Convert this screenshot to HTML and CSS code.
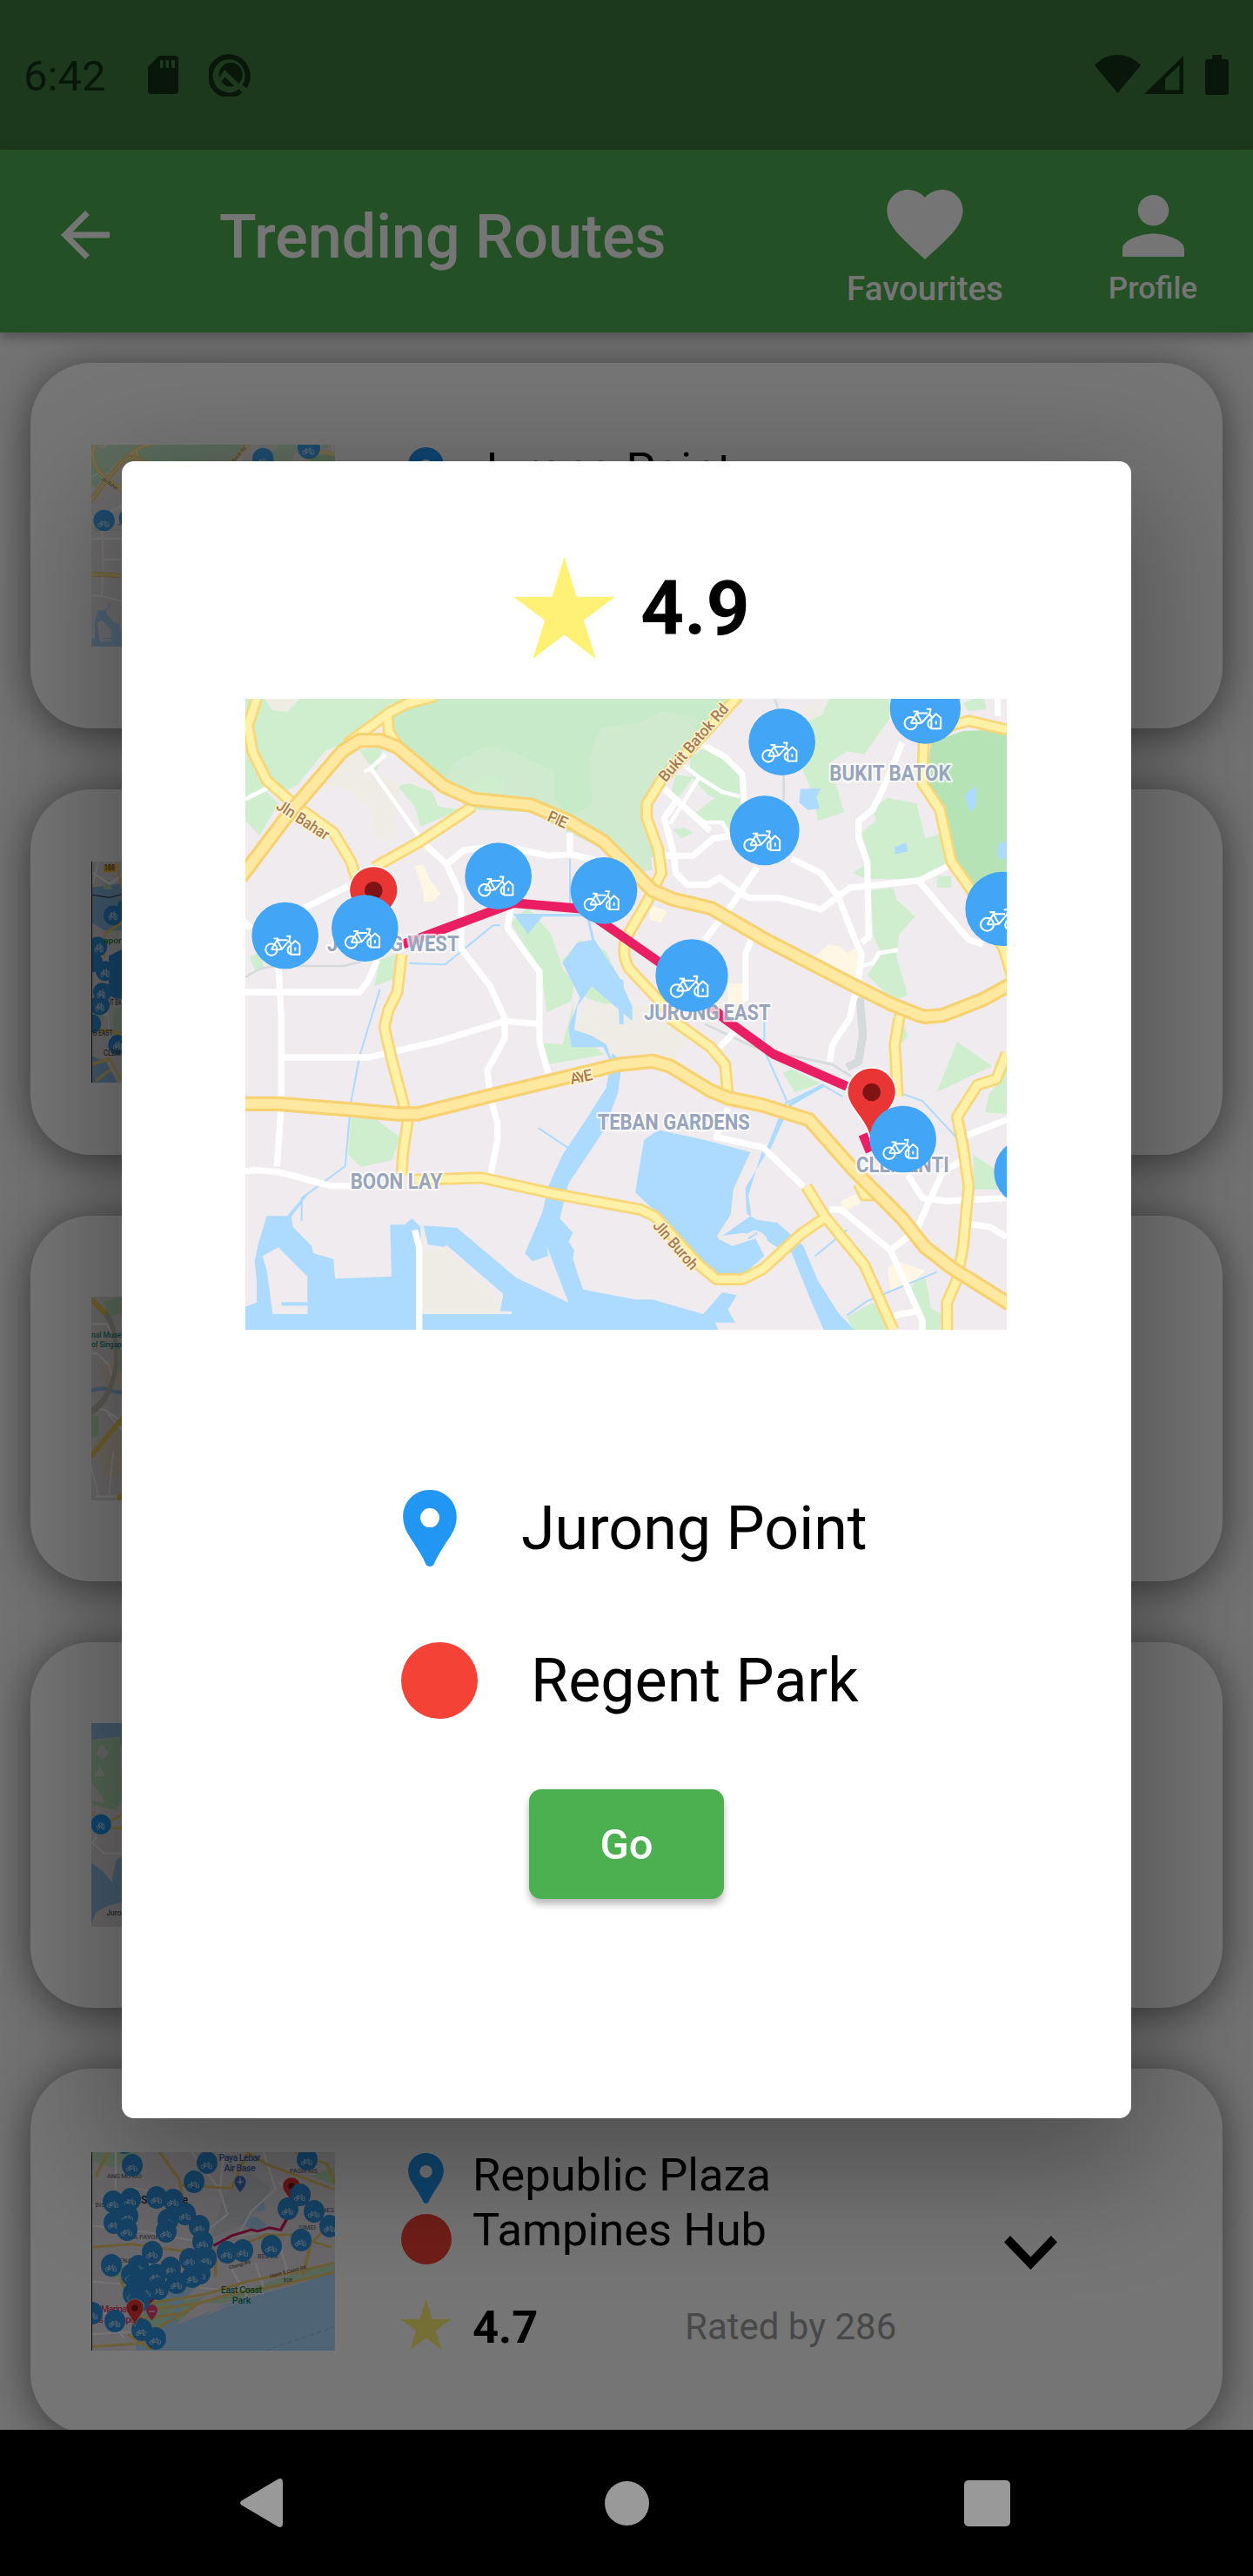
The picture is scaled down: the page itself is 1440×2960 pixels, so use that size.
FILE: index.html
```html
<!DOCTYPE html>
<html lang="en">
<head>
<meta charset="utf-8">
<title>Trending Routes</title>
<link rel="stylesheet" href="styles.css">
</head>
<body>
<svg class="defs" width="0" height="0" aria-hidden="true">
  <symbol id="star" viewBox="6 5.5 12 11.5" preserveAspectRatio="none"><path d="M12 14.3l3.71 2.7-1.42-4.36L18 10h-4.55L12 5.5 10.55 10H6l3.71 2.64L8.29 17z"/></symbol>
  <symbol id="place" viewBox="5 2 14 20"><path fill-rule="evenodd" d="M12 2C8 2 5 5.1 5 9c0 3.6 2.2 5.7 3.6 8.1 1 1.6 1.7 2.7 2.3 4.2.3.9 1.9.9 2.200 0 .6-1.5 1.300-2.600 2.300-4.200C16.800 14.700 19 12.600 19 9c0-3.900-3-7-7-7zm0 4.800a2.500 2.500 0 1 1 0 5 2.500 2.500 0 0 1 0-5z"/></symbol>
  <symbol id="bike" viewBox="-70 -45 140 90" overflow="visible">
    <g fill="none" stroke="#fff" stroke-width="6" stroke-linejoin="round">
      <circle cx="-42" cy="16" r="21"/>
      <path d="M-42 16l20-34L-4 14l26-30M-42 16H-14L-4 14M-24-18H16M-34-24h18M12-32h14l-4 16M22-16l8 14M28 34h32V-2L44-16 28 0z"/>
      <path d="M44 8v12"/>
      <path d="M28 32c-14-2-16-22-2-30"/>
    </g>
  </symbol>
  <symbol id="dock" viewBox="-115 -115 230 230" overflow="visible">
    <circle r="115" fill="#42a5f5"/>
    <use href="#bike" x="-75" y="-10" width="136" height="86"/>
  </symbol>
  <symbol id="end" viewBox="-90 -90 180 270" overflow="visible">
    <path d="M0-84a84 84 0 0 1 84 84C84 55 12 95 4 168Q0 180-4 168C-12 95-84 55-84 0A84 84 0 0 1 0-84z" fill="#ea3535" stroke="#fff" stroke-width="5"/>
    <circle r="31" fill="#801313"/>
  </symbol>
  <defs>
    <g id="mini-dock">
      <ellipse cx="12" cy="13" rx="12" ry="13" fill="#2f93e0"/>
      <use href="#bike" x="4.500" y="11" width="14" height="10"/>
    </g>
  </defs>

  <symbol id="jurong-map" viewBox="36 39 2625 2175" preserveAspectRatio="none">
    <path fill="#efebee" d="M0 0h2700v2300H0z"/>
    <g fill="#ceeece">
      <path d="M36 39H600L380 190 310 220 215 335 150 370 100 350 36 370zM36 370l74-10 40 40-65 110-49-50z"/>
      <path fill="#c7ebc8" d="M590 39H1750L1470 310l-50 110 35 160-75 20-110-80-120-60-130-60-200-20-100-50-170-150-20-80z"/>
      <path fill="#cfeace" d="M750 260l120-60 110 30 120 60v90l60 70 70-50-10-150 40-110 130-20 90-40 120 30-100 200-60 70-20 90 20 160-100 10-60-80-150-70-110-60-220-10-70-90z"/>
      <path d="M800 340l90-40 45 30-25 50-90-5zM560 340l40-10 80 30 20 50 80 10-140 60-20-70zM430 215l80-15-30 120z"/>
      <path d="M1570 240l60-40 90 50 30 60v90l-60 0-60-30-60-70zM1590 430l80-60 75 15v110l-40-10-30-20-60 0zM1510 490l40-6 30 16-40 20zM1500 380l20-80 60 10-60 80z"/>
      <path d="M2050 39h210l-5 71-85 120-60-10-60 40 50 170-90 30-20-100-30-70V120l20-40 40 20z"/>
      <path d="M2250 380l100 20 30 120 55-15 15 105-90 50h-180l-50-20 60-40-30-100 50-40-10-40z"/>
      <path d="M2190 700l80-10 10 40 65 60-55 60-10 80 40 130-50 20-90-90 50-70-30-70zM2420 650h50v40h-50zM2510 55l70-30 10 50-60 5z"/>
      <path d="M950 810l60-50 80 90 40 120 40 50-10 60-85 40-15-110-60-120zM1130 940l60-70 90 40 40 90-60-10-80-50-50 20zM1200 1030l80-20 50 40 20 100-80-60-60-20zM1070 1080h45l-35 40zM1170 1080l-40 150-75-5 20 75 200-35-40-30-80-20z"/>
      <path d="M400 1480l90 10 80 60-30 80-105 22-45-42zM500 940l50-20 10 80-80 30zM50 930l40-20 10 60-30 5z"/>
      <path d="M1890 1330l30-15 100 50-90 30zM2490 1220l120 85-190 90zM2661 1320l-60 80-15 65 75 5zM2545 1610l75 50 10 70h-80zM2110 2170l90-50 70 94H2130zM2350 2040l30-10 20 110 35 20-5 54h-50l-50-140zM2300 1150l20 50-25 30z"/>
    </g>
    <path fill="#b5e3b5" d="M2400 190l110-40 151-5v500l-130 40-60-120-40-160-50-70z"/>
    <path fill="#efebe5" d="M100 39h125l-45 45-50-5zM310 220l110-20 60 90 90 40-20 200-60-10-20-100-80-70-100-20zM1180 1150l50-60 110 0 40 190-50 10-60-60-90-30zM640 1940l90-6 190 180-10 46H640zM1320 1100l130-10 120 90-40 100-210 20zM1960 70l60-30 10 50-60 30z"/>
    <path fill="#fff6e3" d="M620 615l30-5 20 50 38 50-20 25-35 5-5-40zM2000 925l50-40 40 10 20 20 40-20 10 60-20 50zM1700 1020l60 0v70l-60 0zM1430 750l60 20-20 40-40-10zM2090 1770l60-30 5 40-60 30zM2250 2000l40-20 90 30-40 40-80 30z"/>
    <g fill="#addaff">
      <path d="M36 2135l39-15v-80l-7-60 12-60 30-98h70l60-72h10l-55 75 5 35 65 65 5 25 70 20 5 68 195-8-5-178h50l25-22 30 30v300h315v-10h-40l10-60-195-168-10 6-55-8-15-65 115 7 205 173 180 85-75-195 5 35-55 18-25-28 60-140 20-90 50-110 80-120 70-110 20-120 35 30-15 110-50 130-120 180-30 120 45 50-15 30 20 30-5 30 35 105 180 35 60 0 175 50 65-75 50 10-30 50 25 44H36z"/>
      <path d="M36 2160H1640l30 60H36z"/>
      <path d="M960 780h250l20 90-50 10-50 70 60 120-40 100 10 70 110 0 50 100-40-110-50-30-60-20 10-80 50-70 140 120V1100l-50-110-80-120-20-80-60 0-100 0-50 60z"/>
      <path d="M1410 1560l50-35 160 35 170 45-65 115-10 90-50 90 50 25 80-25 30 60-80 70h-80l-140-100-60-110-85-80z"/>
      <path d="M1820 1590l30-15-90 150 5 90 35 20 70 10 90 80 50 120 70 110 55 59h-105l-50-114-60-150-50-20-60-40-60-10-70 10 100-70-10-70zM1950 350l70-3-15 30 10 40-40 5-30-25zM2275 550l40-15 5 30-45 10zM2515 370l40-30v70l-20 20zM2630 540l31-10v60h-31zM1320 1000l20 10v150l-15 0z"/>
    </g>
    <path fill="#efebee" d="M95 1960l55-30 50 50 50 50v130H130l-20-150z"/>
    <path fill="none" stroke="#efebe5" stroke-width="13" d="M1785 1600l-60 130-10 90-45 70q30 30 70 15l50-28q50 10 40 60"/>
    <g fill="none" stroke="#addaff" stroke-width="12">
      <path d="M160 2125h90"/>
      <path stroke-width="6" d="M500 1040l-70 230-30 160-20 220-150 110v80M600 950l125 5 165-135h25M1155 590v170M1825 1100l0 150 80 180 120-60 70 40M1900 1430l-60 150M2300 1400l70 25 130 140M2000 1960l110-90M1800 1880l-30 20M1045 1518l120 80M2110 2165l70-50 240-100"/>
      <path d="M1910 1440l120-70M1890 1480l-50 110"/>
    </g>
    <g fill="none" stroke="#d5dbdd" stroke-width="8">
      <path d="M36 1000q50-40 120-40h220l60-15M1862 39l30 100v250M1620 1160l170 80 270 60 80 50"/>
      <path stroke-width="28" d="M2155 1070l10 130-15 90-40 20"/>
    </g>
    <g fill="none" stroke="#fff" stroke-width="22" stroke-linejoin="round">
      <path stroke-width="14" d="M36 385l75-38M460 285l60-55M445 290l30-12M470 280l180 255M1500 470l100-160 80 50 60 15M1520 390l100 75 60 0 20 35M1550 270l50 40M2160 960l40-10 20-35 65-10"/>
      <path d="M650 535l80 75 50 110v180l100 130 50 110v70l-60 110 10 90 25 90v60l-25 130M240 760l150-75M730 610l60-50 130-15 160 35 80-5 80 20M36 1050h394l30-40 30-70M150 960l10 180v290l-15 220M160 1275h300l240-55 230-70 120 10M950 760l-10 70 110 150v240l30 110M36 1668l30-4 84 6 180 48h70M1155 500v80M25 800l30 30"/>
      <path d="M1470 340l170 155M1530 380l-50 70 30 110 10 80 40 40h70l40-25 100 70h110l140 40 100-75 100-10 140-15 110-55M1480 580h100l70-60 70-10M1610 195l80 45 60 60 5 100M1920 590l100 50 60 80 50 130 30 70-10 90-20 80-10 50-60 90-10 60M2300 190l-30 80-70 150-50 40v60l30 80 5 260-25 20M2360 670l170 200 50 15M1800 620l-80 120-100 130M1780 870l-20 50v160"/>
      <path d="M1670 1240l80-80M1700 1450l-40 100 160 35 140 135M2050 1800l40 0 170 140 110 240v34M2320 1680l50 80 80 10 210-10M2505 1630l-65 40-50 110-40 90-90 70M2520 1545l141-55M2535 1850l70 10 56 35M2270 2165l80-15M620 1870l15 60v284M2630 39v60"/>
    </g>
    <g fill="none" stroke-linejoin="round">
      <path stroke="#f9d678" stroke-width="42" d="M75 39L45 130l15 90 50 100 90 80 140 100 60 100 25 80M690 30l-95 25-60 30-150 110M525 90l5 60 30 50M820 410L640 530 480 620M575 920l-15 130-30 60-15 60 25 110 40 150 15 70-15 100-5 80M620 1697l230-7 250 55 300 55 50 25 150 165 60 50h90l70-35 130-120 80-55M1970 1720l65 105 135 165 100 224M1735 30L1470 320l-50 80v50l40 110 10 80-50 100-70 120q-20 60 10 110l150 160M1500 1140l140 100 50 60 10 110M2661 145l-130-30-60 15-96 55-5 145 60 90 40 180 70 100 110 200 31 100M2290 1140l-15 90 10 180M2661 1260l-36 90-65 20-70 110 20 100 20 140-20 210-20 110-35 80v94M2290 1140l20-50M2150 1710l20 40h40"/>
      <path stroke="#fff1a8" stroke-width="26" d="M75 39L45 130l15 90 50 100 90 80 140 100 60 100 25 80M690 30l-95 25-60 30-150 110M525 90l5 60 30 50M820 410L640 530 480 620M575 920l-15 130-30 60-15 60 25 110 40 150 15 70-15 100-5 80M620 1697l230-7 250 55 300 55 50 25 150 165 60 50h90l70-35 130-120 80-55M1970 1720l65 105 135 165 100 224M1735 30L1470 320l-50 80v50l40 110 10 80-50 100-70 120q-20 60 10 110l150 160M1500 1140l140 100 50 60 10 110M2661 145l-130-30-60 15-96 55-5 145 60 90 40 180 70 100 110 200 31 100M2290 1140l-15 90 10 180M2661 1260l-36 90-65 20-70 110 20 100 20 140-20 210-20 110-35 80v94M2290 1140l20-50M2150 1710l20 40h40"/>
      <path stroke="#f8d170" stroke-width="52" d="M20 655l170-225 180-210 60-38h70l60 23 160 135 100 45 200 20 130 55 120 70 110 110 60 60 70 30 130 30 190 110 290 150 140 70 100 40 20 5 60-5 140-55 100-55M20 1435h130l250 20 160 15h70l250-63 440-107 120-12 60 17 140 85 60 25 120 25 160 50 150 170 170 170 80 100 90 70 200 125"/>
      <path stroke="#ffe8a0" stroke-width="33" d="M20 655l170-225 180-210 60-38h70l60 23 160 135 100 45 200 20 130 55 120 70 110 110 60 60 70 30 130 30 190 110 290 150 140 70 100 40 20 5 60-5 140-55 100-55M20 1435h130l250 20 160 15h70l250-63 440-107 120-12 60 17 140 85 60 25 120 25 160 50 150 170 170 170 80 100 90 70 200 125"/>
      <path stroke="#e91e63" stroke-width="32" d="M580 885l380-142 240 20 260 182 230 198 165 120 255 112M2165 1540l25 60"/>
    </g>
    <g class="place-name">
      <text x="318" y="908" textLength="455" lengthAdjust="spacingAndGlyphs">JURONG WEST</text>
      <text x="2050" y="322" textLength="418" lengthAdjust="spacingAndGlyphs">BUKIT BATOK</text>
      <text x="1410" y="1145" textLength="437" lengthAdjust="spacingAndGlyphs">JURONG EAST</text>
      <text x="1250" y="1525" textLength="525" lengthAdjust="spacingAndGlyphs">TEBAN GARDENS</text>
      <text x="398" y="1728" textLength="317" lengthAdjust="spacingAndGlyphs">BOON LAY</text>
      <text x="2142" y="1670" textLength="320" lengthAdjust="spacingAndGlyphs">CLEMENTI</text>
    </g>
    <g class="road-name">
      <text transform="translate(225 472) rotate(33)" textLength="205" lengthAdjust="spacingAndGlyphs">Jln Bahar</text>
      <text transform="translate(1105 472) rotate(24)" textLength="70">PIE</text>
      <text transform="translate(1595 202) rotate(-49)" textLength="335" lengthAdjust="spacingAndGlyphs">Bukit Batok Rd</text>
      <text transform="translate(1198 1360) rotate(-12)" textLength="78">AYE</text>
      <text transform="translate(1506 1934) rotate(49)" textLength="205" lengthAdjust="spacingAndGlyphs">Jln Buroh</text>
    </g>
    <use href="#end" x="388" y="610" width="180" height="270"/>
    <use href="#end" x="2105" y="1305" width="180" height="270"/>
    <use href="#dock" x="58" y="740" width="230" height="230"/>
    <use href="#dock" x="330" y="715" width="236" height="230"/>
    <use href="#dock" x="793" y="535" width="230" height="230"/>
    <use href="#dock" x="1157" y="585" width="230" height="230"/>
    <use href="#dock" x="1771" y="70" width="230" height="236"/>
    <use href="#dock" x="1706" y="373" width="240" height="240"/>
    <use href="#dock" x="2258" y="-50" width="244" height="244"/>
    <use href="#dock" x="2518" y="635" width="256" height="256"/>
    <use href="#dock" x="1450" y="868" width="250" height="250"/>
    <use href="#dock" x="2188" y="1442" width="230" height="230"/>
    <use href="#dock" x="2617" y="1555" width="230" height="230"/>
  </symbol>
</svg>

<div class="screen">
  <div class="status-back"></div>
  <header class="app-bar">
    <svg class="back" viewBox="4 4 16 16"><path d="M20 11H7.830l5.590-5.590L12 4l-8 8 8 8 1.410-1.410L7.830 13H20z"/></svg>
    <h1 class="title">Trending Routes</h1>
    <div class="action favourites">
      <svg class="heart" viewBox="2 3 20 18.350"><path d="M12 21.350l-1.450-1.320C5.400 15.360 2 12.280 2 8.500 2 5.420 4.420 3 7.500 3c1.740 0 3.410.81 4.500 2.090C13.090 3.810 14.760 3 16.500 3 19.580 3 22 5.420 22 8.500c0 3.780-3.400 6.860-8.550 11.540z"/></svg>
      <span>Favourites</span>
    </div>
    <div class="action profile">
      <svg class="person" viewBox="4 4 16 16"><path d="M12 12c2.210 0 4-1.790 4-4s-1.790-4-4-4-4 1.790-4 4 1.790 4 4 4zm0 2c-2.670 0-8 1.340-8 4v2h16v-2c0-2.660-5.330-4-8-4z"/></svg>
      <span>Profile</span>
    </div>
  </header>

  <main class="routes">
    <article class="card">
      <svg class="thumb thumb-jurong"><use href="#jurong-map"/></svg>
      <div class="info">
        <div class="stops">
          <div class="stop-icons"><svg class="pin"><use href="#place"/></svg><i class="dot"></i></div>
          <div class="names"><p>Jurong Point</p></div>
        </div>
      </div>
    </article>

    <article class="card">
      <svg class="thumb thumb-north" viewBox="315 925 105 398" preserveAspectRatio="none">
        <path fill="#e4dfe2" d="M315 925h105v398H315z"/>
        <path fill="#8fc0ea" d="M315 972l105-8v85l-60 0-45-15zM315 1275l50 10 40 38h-90z"/>
        <path fill="#bfe3bf" d="M355 965l20-8 12 18h-28zM390 1195l30-10v50h-30zM318 1200l20-30 20 40z"/>
        <g fill="none" stroke="#fff" stroke-width="4"><path d="M318 945l60 20 40-15M340 925l-20 40M370 1190l10 60M318 1190l50 10"/></g>
        <g fill="none" stroke="#f2d275" stroke-width="6"><path d="M400 925l20 45M360 1100v-45l60-20M318 1225l100 10M318 1290l60-10 40 38M330 1320l50-20"/></g>
        <path fill="none" stroke="#444" stroke-width="2" d="M318 985l60 5 42-6"/>
        <path fill="#ffc928" d="M357 930h42v14h-42z"/>
        <g fill="#2f93e0"><ellipse cx="390" cy="1022" rx="33" ry="18"/><ellipse cx="420" cy="1008" rx="15" ry="13"/><ellipse cx="337" cy="1078" rx="33" ry="18"/><ellipse cx="325" cy="1107" rx="30" ry="17"/><path d="M375 1095l45-12v90l-45-10z"/><ellipse cx="362" cy="1122" rx="32" ry="18"/><ellipse cx="405" cy="1153" rx="34" ry="19"/><ellipse cx="353" cy="1160" rx="32" ry="17"/><ellipse cx="343" cy="1184" rx="35" ry="17"/><ellipse cx="318" cy="1217" rx="31" ry="17"/><ellipse cx="405" cy="1255" rx="32" ry="18"/></g>
        <g><use href="#bike" x="370" y="1012" width="38" height="20"/><use href="#bike" x="322" y="1070" width="38" height="20"/><use href="#bike" x="343" y="1115" width="38" height="20"/><use href="#bike" x="330" y="1153" width="38" height="20"/><use href="#bike" x="325" y="1176" width="38" height="20"/><use href="#bike" x="386" y="1246" width="38" height="20"/></g>
        <g class="tiny"><text x="359" y="941" textLength="36" lengthAdjust="spacingAndGlyphs">188</text><text x="357" y="1072" class="green" textLength="62" lengthAdjust="spacingAndGlyphs">apor</text><text x="378" y="1184" textLength="40" lengthAdjust="spacingAndGlyphs">IT BA</text><text x="320" y="1239" textLength="68" lengthAdjust="spacingAndGlyphs">G EAST</text><text x="357" y="1275" textLength="60" lengthAdjust="spacingAndGlyphs">CLEM</text></g>
        <path fill="#111" d="M315 925h3v398h-3z"/>
      </svg>
    </article>

    <article class="card">
      <svg class="thumb thumb-museum" viewBox="315 141 105 366" preserveAspectRatio="none">
        <path fill="#e5dfdf" d="M315 141h105v366H315z"/>
        <path fill="#eadfc8" d="M345 270l75-20v50l-50 10zM340 420l80-40v90l-60-10z"/>
        <path fill="#b9e0b9" d="M355 150l65-9v30l-40 5zM410 225h10v50h-10zM315 355l25 0v35l-25 5z"/>
        <path fill="none" stroke="#92c4ea" stroke-width="7" d="M315 310q30-6 60-3 25 8 45 5"/>
        <g fill="none" stroke="#fff" stroke-width="4"><path d="M318 190h50l20 20M315 243h20l40 20 10 20M315 340l50 5 55 20M370 350l50 30M315 445l25 55M390 420l-15 80M330 500l90 0"/></g>
        <path fill="none" stroke="#c9c2b8" stroke-width="14" d="M315 347q65-20 85-80 5-75-38-96"/>
        <path fill="none" stroke="#f1cf58" stroke-width="12" d="M315 147l50 24M315 427l105-66M405 505l15-6"/>
        <g class="tiny teal"><text x="315" y="214" textLength="104" lengthAdjust="spacingAndGlyphs">nal Muse</text><text x="315" y="232" textLength="104" lengthAdjust="spacingAndGlyphs">of Singap</text></g>
      </svg>
    </article>

    <article class="card">
      <svg class="thumb thumb-west" viewBox="315 909 105 366" preserveAspectRatio="none">
        <path fill="#e5dfe2" d="M315 909h105v366H315z"/>
        <path fill="#94c3e9" d="M315 909h105v45l-12-20-93 5zM315 1160l40 15 30 20 15-40 20-5v80l-60 10-30 10-15 20z"/>
        <path fill="#b8e0b8" d="M315 940l100-5 5 110-50 10-55-40z"/>
        <path fill="#e5dfe2" d="M330 965l20-18 25 15-20 12zM325 1005l18-18 20 16z"/>
        <path fill="#b8e0b8" d="M325 1055l95-10-20 20-50-5zM315 1050l30 0-20 10z"/>
        <g fill="none" stroke="#fff" stroke-width="3"><path d="M315 1125l20-12M320 1125l40 18h60"/></g>
        <path fill="none" stroke="#f1cf58" stroke-width="4" d="M315 1072l40 20 65-18M350 1098h70"/>
        <ellipse cx="348" cy="1091" rx="35" ry="18" fill="#2196f3"/><use href="#bike" x="326" y="1084" width="42" height="18"/>
        <g class="tiny"><text x="367" y="1254" textLength="52" lengthAdjust="spacingAndGlyphs">Juro</text></g>
      </svg>
    </article>

    <article class="card">
      <svg class="thumb thumb-east" viewBox="0 0 280 228">
        <path fill="#e8e2e6" d="M0 0h280v228H0z"/>
        <g transform="scale(.4591 .3571) translate(-229 -204)">
          <path fill="#d5dbdd" d="M560 350l60-90 60 60-60 110-90 50z"/>
          <path fill="#bfe4bf" d="M229 204h120l-60 50-60-20zM400 640l60 40 50-10-60 80-60 60-60-60zM838 560v30L690 640l-130 50-60 0 130-50 120-50zM250 560l50-20 20 60-40 10zM430 620l50 20-30 40zM780 280l58-30v60z"/>
          <path fill="#addaff" d="M838 590L700 645l-140 50-70 50-80 60-30 37H340V815l40-15 60-90-40-50-20 20 10-30 90-30 10-20 0 40-30 40-20 80 120-60 150-50 130-60zM640 370l20-10 5 30-20 5zM600 430l40-20 30 30-30 20zM500 520l30-20 20 30-30 10z"/>
          <path fill="#addaff" d="M838 590v260H370l90-90 110-60 130-50z"/>
          <g fill="none" stroke="#fff" stroke-width="5"><path d="M229 380l110-60 80 20M290 204v120M480 204l70 120 20 80-60 60M229 440l130 20 130 30M560 204l-10 130M660 204l30 120-60 70-30 70M700 300l30 60M560 480l110-20 90 20M580 580l40 90M640 560l20 80M700 500l20 90M500 640l160 20M229 620l100 10M250 700l60 100M229 790l130-10"/></g>
          <g fill="none" stroke="#efcd71" stroke-width="8"><path d="M229 510l100-10 120 20 100 10 120-60 60 0 100 40M400 204l50 90 10 90 60 100 20 60 0 60M450 310l130 10 40-116M620 204l50 40 168 80M838 560l-100 30-120 30-100 40-140 30M838 590l-130 40-130 30-80 30-120 20M300 610l50 130 120-20M229 830l120-10 60-60 90-70M270 204l-30 80M740 204l80 40 18 60M838 420l-60 80-20 100M320 790l60 50"/></g>
          <g fill="none" stroke="#d81b60" stroke-width="8"><path d="M535 505l45-32 50-20 15 6 30-12 28 7 17-39M388 670l-28 35"/></g>
          <path fill="none" stroke="#8db5d8" stroke-width="2" stroke-dasharray="12 8" d="M665 842l173-75"/>
        </g>
        <g class="mini">
          <text x="170.500" y="10" class="blue" textLength="48">Paya Lebar</text><text x="170.500" y="21.500" class="blue" textLength="36">Air Base</text>
          <text x="38" y="30" textLength="40">ANG MO KIO</text><text x="10" y="62.500">BIS</text>
          <text x="84" y="59" class="city" textLength="54">Singapore</text>
          <text x="244" y="24" textLength="32">PASIR RIS</text><text x="248" y="88.500">SIMEI</text><text x="272" y="69">NES</text>
          <text x="203" y="122">BEDOK</text><text x="61" y="99.500">OA PAYOH</text><text x="39" y="127">ENA</text>
          <text transform="translate(171 131) rotate(-16)" class="road">Changi Rd</text><text transform="translate(226 139) rotate(-14)" class="road">Upper E Coast Rd</text><text x="226" y="149" class="road">ECP</text>
          <text x="172.500" y="162" class="green" textLength="47">East Coast</text><text x="172.500" y="174" class="green">Park</text>
          <text x="26" y="184" class="pink" textLength="30">Marina</text><text x="31" y="195.500" class="pink" textLength="56">ds Singapore</text>
        </g>
        <path fill="#3f73d8" d="M171 27a6.500 6.500 0 0 1 6.500 6.500q0 5-6.500 12.500-6.500-7.500-6.500-12.500A6.500 6.500 0 0 1 171 27z"/><path stroke="#fff" d="M171 29.500v8M167.500 34h7"/>
        <path fill="#ec407a" d="M69.500 175a6.500 6.500 0 0 1 6.500 6.500q0 4-6.500 12-6.500-8-6.500-12a6.500 6.500 0 0 1 6.500-6.500z"/><path stroke="#fff" d="M66 183h7"/>
        <use href="#end" x="219" y="28" width="22" height="33"/>
        <g>
          <use href="#mini-dock" x="35" y="2"/><use href="#mini-dock" x="121" y="-1"/><use href="#mini-dock" x="236" y="-5"/><use href="#mini-dock" x="106" y="21"/><use href="#mini-dock" x="228" y="36"/><use href="#mini-dock" x="214" y="52"/><use href="#mini-dock" x="244" y="55"/><use href="#mini-dock" x="262" y="72"/>
          <use href="#mini-dock" x="13" y="44"/><use href="#mini-dock" x="33" y="41"/><use href="#mini-dock" x="63" y="39"/><use href="#mini-dock" x="82" y="42"/><use href="#mini-dock" x="96" y="58"/><use href="#mini-dock" x="76" y="65"/><use href="#mini-dock" x="74" y="78"/><use href="#mini-dock" x="112" y="72"/><use href="#mini-dock" x="116" y="90"/>
          <use href="#mini-dock" x="14" y="68"/><use href="#mini-dock" x="30" y="60"/><use href="#mini-dock" x="29" y="76"/><use href="#mini-dock" x="58" y="102"/><use href="#mini-dock" x="11" y="117"/><use href="#mini-dock" x="42" y="118"/><use href="#mini-dock" x="79" y="120"/><use href="#mini-dock" x="34" y="128"/><use href="#mini-dock" x="40" y="138"/><use href="#mini-dock" x="50" y="134"/><use href="#mini-dock" x="62" y="128"/>
          <use href="#mini-dock" x="144" y="102"/><use href="#mini-dock" x="162" y="100"/><use href="#mini-dock" x="101" y="110"/><use href="#mini-dock" x="120" y="109"/><use href="#mini-dock" x="195" y="95"/><use href="#mini-dock" x="229" y="88"/><use href="#mini-dock" x="113" y="126"/><use href="#mini-dock" x="104" y="130"/><use href="#mini-dock" x="86" y="137"/><use href="#mini-dock" x="65" y="144"/><use href="#mini-dock" x="50" y="146"/><use href="#mini-dock" x="36" y="150"/><use href="#mini-dock" x="43" y="158"/>
          <use href="#mini-dock" x="-11" y="172"/><use href="#mini-dock" x="15" y="181"/><use href="#mini-dock" x="46" y="191"/><use href="#mini-dock" x="62" y="201"/><use href="#mini-dock" x="26" y="-24"/>
        </g>
        <use href="#end" x="39" y="168" width="22" height="33"/>
        <path fill="#111" d="M0 0h1v228H0z"/>
      </svg>
      <div class="info">
        <div class="stops">
          <div class="stop-icons"><svg class="pin"><use href="#place"/></svg><i class="dot"></i></div>
          <div class="names"><p>Republic Plaza</p><p>Tampines Hub</p></div>
        </div>
        <div class="rating">
          <svg class="small-star"><use href="#star"/></svg>
          <b class="score">4.7</b>
          <span class="rated">Rated by 286</span>
        </div>
      </div>
      <svg class="chevron" viewBox="0 0 61 39"><path d="M7 0l23.500 24.500L54 0l7 7.500L30.500 39 0 7.500z"/></svg>
    </article>
  </main>

  <div class="scrim"></div>

  <div class="status-bar">
    <span class="time">6:42</span>
    <svg class="sd" viewBox="0 0 35 44"><path fill-rule="evenodd" d="M13 0h18q4 0 4 4v36q0 4-4 4H4q-4 0-4-4V13zm1 5v9h3.500V5zm6.500 0v9H24V5zM27 5v9h4V5z"/></svg>
    <svg class="sync" viewBox="0 0 49 50"><path class="ring" d="M36.500 43.500A21.500 22 0 1 1 41 38.500"/><path d="M12 28A13.500 14 0 1 1 34.500 35L18 19z M14.500 32.500L18.500 27.500 29 37.500Q20 41 14.500 32.500z"/></svg>
    <span class="spacer"></span>
    <svg class="wifi" viewBox="0 0 53 44"><path d="M0 12Q11 0 26.500 0T53 12L26.500 44z"/></svg>
    <svg class="signal" viewBox="0 0 45 44"><path fill-rule="evenodd" d="M45 0v44H0zM40.500 11L24 26.500v13h16.500z"/></svg>
    <svg class="battery" viewBox="0 0 27 46"><path d="M8 0h11v5h5q3 0 3 3v35q0 3-3 3H3q-3 0-3-3V8q0-3 3-3h5z"/></svg>
  </div>

  <section class="dialog">
    <div class="dialog-score">
      <svg class="big-star"><use href="#star"/></svg>
      <b>4.9</b>
    </div>
    <svg class="route-map"><use href="#jurong-map"/></svg>
    <div class="stop stop-from"><svg class="big-pin"><use href="#place"/></svg><span>Jurong Point</span></div>
    <div class="stop stop-to"><i class="big-dot"></i><span>Regent Park</span></div>
    <button class="go">Go</button>
  </section>

  <nav class="nav-bar">
    <svg class="nav-back" viewBox="0 0 49 56"><path d="M1.500 25.500L43 1q6-3 6 4v46q0 7-6 4L1.500 30.500q-3-2.500 0-5z"/></svg>
    <i class="nav-home"></i>
    <i class="nav-recent"></i>
  </nav>
</div>
</body>
</html>
```
FILE: styles.css
```css
* { box-sizing: border-box; margin: 0; padding: 0; }
body { background: #000; font-family: Roboto, "Noto Sans", sans-serif; color: #000; }
svg { display: block; flex: none; }
.defs { position: absolute; }

.screen { position: relative; width: 1440px; height: 2960px; overflow: hidden; background: #fafafa; display: flex; flex-direction: column; }
.status-back { height: 172px; flex: none; background: #3d7c3f; position: relative; z-index: 1; }

.app-bar { height: 210px; flex: none; background: #4caf50; display: flex; color: #fff; position: relative; z-index: 1; box-shadow: 0 4px 14px rgba(0,0,0,.35); }
.app-bar svg { fill: #fff; }
.back { width: 56px; height: 56px; margin: 70px 0 0 70px; }
.title { width: 719px; margin: 59px 0 0 126px; font-size: 70px; line-height: 82px; font-weight: 500; white-space: nowrap; }
.action { display: flex; flex-direction: column; align-items: center; font-weight: 500; }
.favourites { width: 184px; font-size: 38.5px; line-height: 45px; }
.heart { width: 88px; height: 80px; margin: 46px 0 11px; }
.profile { width: 104px; margin-left: 118px; font-size: 35px; line-height: 41px; }
.person { width: 71px; height: 71px; margin: 52px 0 16px; }

.routes { height: 2410px; flex: none; padding: 35px; display: flex; flex-direction: column; gap: 70px; overflow: hidden; }
.card { height: 420px; flex: none; display: flex; align-items: flex-start; padding-left: 70px; border-radius: 70px; background: #fff; box-shadow: 0 6px 48px rgba(0,0,0,.5); }
.thumb { width: 280px; align-self: center; overflow: hidden; }
.thumb-jurong { height: 232px; }
.thumb-north, .thumb-museum, .thumb-west { width: 35px; }
.thumb-north { height: 254px; }
.thumb-museum, .thumb-west { height: 234px; }
.thumb-east { height: 228px; }

.info { width: 694px; margin-left: 75px; padding-top: 91px; }
.stops { display: flex; }
.stop-icons { width: 59px; padding-top: 6px; display: flex; flex-direction: column; align-items: center; gap: 12px; }
.pin { width: 41px; height: 58px; fill: #2196f3; }
.dot { width: 58px; height: 58px; border-radius: 50%; background: #f44336; }
.names { margin-left: 24px; font-size: 52.5px; line-height: 63px; white-space: nowrap; }
.rating { margin-top: 40px; display: flex; }
.small-star { width: 59px; height: 58px; fill: #fff176; }
.score { width: 244px; margin: 1px 0 0 24px; font-size: 52.5px; line-height: 62px; }
.rated { margin-top: 7px; font-size: 42px; line-height: 50px; color: #9e9e9e; white-space: nowrap; }
.chevron { width: 61px; height: 39px; align-self: center; margin-top: 3px; }

.scrim { position: absolute; z-index: 2; left: 0; top: 0; width: 1440px; height: 2792px; background: rgba(0,0,0,.54); }

.status-bar { position: absolute; z-index: 3; left: 0; top: 0; width: 1440px; height: 172px; padding: 0 28px 0 27px; display: flex; align-items: flex-start; color: #09170b; }
.status-bar svg { fill: #09170b; }
.status-bar .ring { fill: none; stroke: #09170b; stroke-width: 6; }
.time { width: 143px; margin-top: 59px; font-size: 49px; line-height: 58px; }
.sd { width: 35px; height: 44px; margin-top: 64px; }
.sync { width: 49px; height: 50px; margin: 61px 0 0 35px; }
.spacer { flex: 1; }
.wifi { width: 53px; height: 44px; margin-top: 63px; }
.signal { width: 45px; height: 44px; margin: 64px 25px 0 4px; }
.battery { width: 27px; height: 46px; margin-top: 63px; }

.dialog { position: absolute; z-index: 4; left: 140px; top: 530px; width: 1160px; height: 1904px; padding-top: 110px; border-radius: 14px; background: #fff; box-shadow: 0 45px 140px 15px rgba(0,0,0,.33); display: flex; flex-direction: column; align-items: flex-start; }
.dialog-score { height: 117px; margin-left: 450px; display: flex; align-items: center; gap: 29px; font-size: 87.5px; line-height: 102px; }
.big-star { width: 117px; height: 117px; fill: #fff176; }
.route-map { width: 875px; height: 725px; margin: 46px 0 184px 142px; }
.stop { height: 88px; display: flex; align-items: center; font-size: 70px; line-height: 82px; white-space: nowrap; }
.stop-from { margin-left: 323px; gap: 74px; }
.stop-to { margin: 87px 0 81px 321px; gap: 61px; }
.big-pin { width: 62px; height: 88px; fill: #2196f3; }
.big-dot { width: 88px; height: 88px; border-radius: 50%; background: #f44336; }
.go { width: 224px; height: 126px; padding-top: 1px; margin-left: 468px; border: 0; border-radius: 14px; background: #4caf50; color: #fff; font: 500 49px/58px Roboto, sans-serif; box-shadow: 0 6px 8px rgba(0,0,0,.28); }

.nav-bar { height: 168px; flex: none; position: relative; z-index: 5; background: #000; display: flex; align-items: center; padding-left: 276px; }
.nav-back { width: 49px; height: 56px; fill: #999; }
.nav-home { width: 51px; height: 51px; margin-left: 370px; border-radius: 50%; background: #999; }
.nav-recent { width: 53px; height: 53px; margin-left: 362px; border-radius: 5px; background: #999; }

.place-name { font-size: 77px; font-weight: 700; fill: #98a5bc; stroke: #fff; stroke-opacity: .75; stroke-width: 14px; paint-order: stroke; stroke-linejoin: round; }
.road-name { font-size: 54px; font-weight: 500; fill: #a87a52; stroke: #fff3cc; stroke-width: 10px; paint-order: stroke; text-anchor: middle; }
.tiny { font-size: 15px; font-weight: 500; fill: #555; }
.green { fill: #1c8a45; }
.teal { fill: #178a80; }
.mini { font-size: 7.5px; font-weight: 500; fill: #6f7887; text-anchor: middle; }
.mini .blue { font-size: 10.5px; fill: #3465b5; }
.mini .city { font-size: 12px; fill: #222; }
.mini .green { font-size: 10.5px; fill: #1c7a45; }
.mini .pink { font-size: 10.5px; fill: #e0356f; }
.mini .road { font-size: 5.5px; fill: #6d5a48; }
```
